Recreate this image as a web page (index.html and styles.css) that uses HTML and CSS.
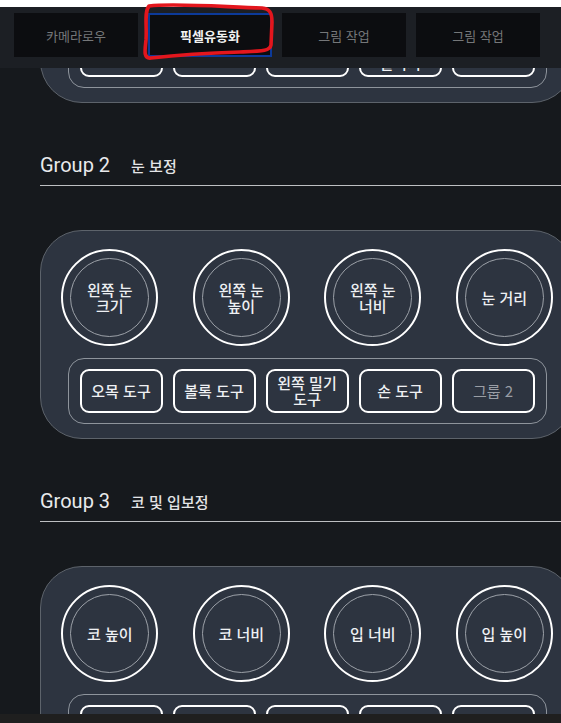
FILE: index.html
```html
<!doctype html>
<html lang="ko">
<head>
  <meta charset="utf-8" />
  <meta name="viewport" content="width=device-width,initial-scale=1" />
  <title>Face Tools</title>
  <link rel="stylesheet" href="styles.css">
</head>
<body>
  <div id="topbar">
    <div id="tabs">
      <button class="tab">카메라로우</button>
      <button class="tab active">픽셀유동화</button>
      <button class="tab">그림 작업</button>
      <button class="tab">그림 작업</button>
    </div>
    <!-- hand-drawn marker around the active tab -->
    <svg id="mark" width="561" height="68" viewBox="0 0 561 68">
      <path d="M149,6 C175,3 225,7 262,8 C270,9 272,13 272,22 L271,45 C270,51 263,51 240,52 C210,53 178,55 151,58 C143,59 145,50 146,40 C147,26 144,12 149,6 Z"
            fill="none" stroke="#e3161d" stroke-width="3.6" stroke-linejoin="round" />
    </svg>
  </div>

  <div id="main">
    <section class="group">
      <div class="ghead"><span class="gname">Group 1</span><span class="gsub">얼굴 보정</span></div>
      <div class="panel">
        <div class="dials">
          <div class="dial">얼굴<br>크기</div>
          <div class="dial">턱 너비</div>
          <div class="dial">이마<br>높이</div>
          <div class="dial">볼 너비</div>
        </div>
        <div class="tools">
          <div class="tool">오목 도구</div>
          <div class="tool">볼록 도구</div>
          <div class="tool">회전 도구</div>
          <div class="tool">오른쪽<br>밀어기</div>
          <div class="tool">손 도구</div>
        </div>
      </div>
    </section>

    <section class="group">
      <div class="ghead"><span class="gname">Group 2</span><span class="gsub">눈 보정</span></div>
      <div class="panel">
        <div class="dials">
          <div class="dial">왼쪽 눈<br>크기</div>
          <div class="dial">왼쪽 눈<br>높이</div>
          <div class="dial">왼쪽 눈<br>너비</div>
          <div class="dial">눈 거리</div>
        </div>
        <div class="tools">
          <div class="tool">오목 도구</div>
          <div class="tool">볼록 도구</div>
          <div class="tool">왼쪽 밀기<br>도구</div>
          <div class="tool">손 도구</div>
          <div class="tool dim">그룹 2</div>
        </div>
      </div>
    </section>

    <section class="group">
      <div class="ghead"><span class="gname">Group 3</span><span class="gsub">코 및 입보정</span></div>
      <div class="panel">
        <div class="dials">
          <div class="dial">코 높이</div>
          <div class="dial">코 너비</div>
          <div class="dial">입 너비</div>
          <div class="dial">입 높이</div>
        </div>
        <div class="tools">
          <div class="tool">오목 도구</div>
          <div class="tool">볼록 도구</div>
          <div class="tool">밀기 도구</div>
          <div class="tool">손 도구</div>
          <div class="tool dim">그룹 3</div>
        </div>
      </div>
    </section>
  </div>

  <div id="scrollbar"></div>
</body>
</html>
```

FILE: styles.css
```css
html, body { margin:0; padding:0; height:100%; background:#16191d; overflow:hidden;
  font-family:Roboto,"Noto Sans CJK KR",sans-serif; color:#eef0f3; }

#topbar{
  position:fixed; left:0; right:0; top:0; z-index:10;
  border-top:7px solid #fff; background:#1c1f24;
  height:68px; box-sizing:border-box;
}
#tabs{ display:flex; gap:10px; padding:6px 0 0 14px; }
.tab{
  width:124px; height:44px; box-sizing:border-box; border:0; border-radius:0;
  background:#0c0d10; color:#757779; padding:0;
  font-family:"Noto Sans CJK KR",sans-serif; font-size:13px; font-weight:400;
}
.tab.active{ border:2px solid #0c3a9a; color:#f2f2f2; font-weight:700; }
#mark{ position:absolute; left:0; top:-7px; pointer-events:none; }

#main{ margin-top:-184px; }
.group{ width:534px; margin:49px 0 0 40px; }
.group:first-child{ margin-top:0; }
.ghead{
  display:flex; align-items:baseline; gap:21px;
  line-height:26px; padding-bottom:6px; border-bottom:1px solid #bdbfc2;
}
.gname{ font-size:20px; font-weight:400; color:#e9eaec; }
.gsub{ font-family:"Noto Sans CJK KR",sans-serif; font-size:15px; font-weight:500; color:#e4e5e7; }

.panel{
  margin-top:44px; background:#2d3440; border:1px solid #5d636b; border-radius:42px;
  padding:18px 0 14px;
}
.dials{ display:flex; justify-content:center; gap:34.5px; }
.dial{
  position:relative; width:97px; height:97px; box-sizing:border-box;
  border:2px solid #fff; border-radius:50%;
  display:flex; align-items:center; justify-content:center; text-align:center;
  font-family:"Noto Sans CJK KR",sans-serif; font-size:15px; font-weight:500; line-height:16px;
}
.dial::before{
  content:""; position:absolute; inset:7px; border:1px solid #9ca1a8; border-radius:50%;
}
.tools{
  width:479px; box-sizing:border-box; margin:12px auto 0;
  border:1px solid #8e949c; border-radius:16px; padding:10px 0;
  display:flex; justify-content:center; gap:10px;
}
.tool{
  width:83px; height:44px; box-sizing:border-box; border:2px solid #fff; border-radius:9px;
  display:flex; align-items:center; justify-content:center; text-align:center;
  font-family:"Noto Sans CJK KR",sans-serif; font-size:15px; font-weight:500; line-height:16px;
}
.tool.dim{ color:#9a9ea5; font-weight:400; }

#scrollbar{ position:fixed; left:0; right:0; bottom:0; height:9px; background:#1f1f1f; z-index:11; }
```
